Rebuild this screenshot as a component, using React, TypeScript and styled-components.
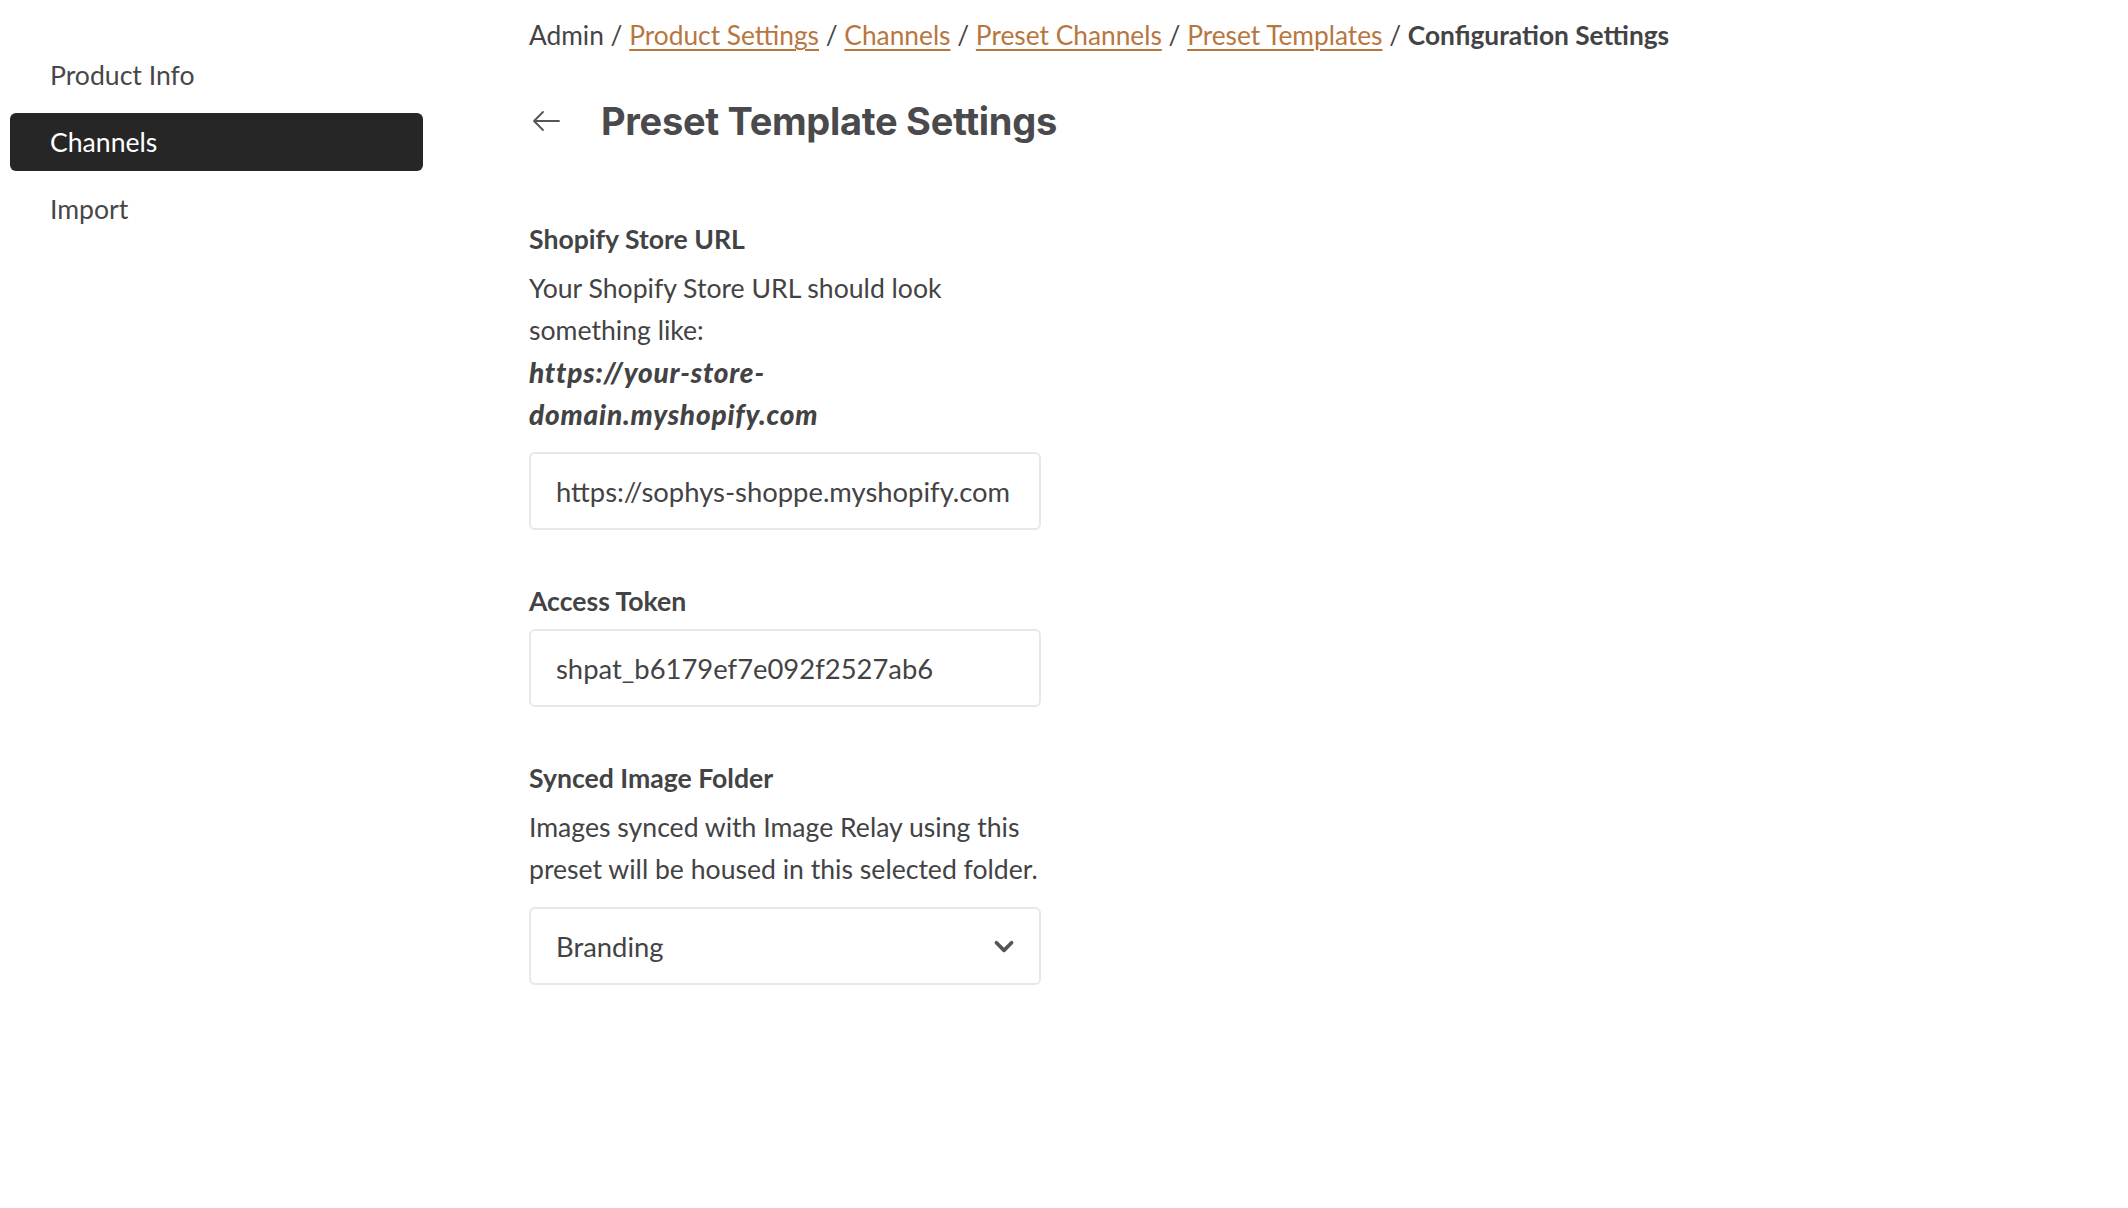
import React from 'react'
import styled, { createGlobalStyle } from 'styled-components'

const GlobalStyle = createGlobalStyle`
    * {
        box-sizing: border-box;
    }

    body {
        margin: 0;
        background: #fff;
        font-family: Lato, "Noto Sans", sans-serif;
        color: #434345;
    }
`

const Page = styled.div`
    display: flex;
    min-height: 1208px;
`

const Sidebar = styled.nav`
    width: 413px;
    margin-left: 10px;
    padding-top: 46px;
`

const NavList = styled.ul`
    display: flex;
    flex-direction: column;
    gap: 9px;
    margin: 0;
    padding: 0;
`

const NavItem = styled.li<{ $active?: boolean }>`
    list-style-type: none;
    height: 58px;
    display: flex;
    align-items: center;
    padding-left: 40px;
    border-radius: 6px;
    font-size: 26.6px;
    background: ${p => (p.$active ? '#262626' : 'transparent')};
    color: ${p => (p.$active ? '#fff' : '#47474a')};
`

const Main = styled.main`
    margin-left: 106px;
    padding-top: 14px;
    width: 1200px;
`

const Breadcrumb = styled.div`
    font-size: 26.3px;
    line-height: 42px;
    color: #434345;
    white-space: nowrap;

    a {
        color: #b8763f;
        text-decoration: underline;
        text-underline-offset: 4px;
        text-decoration-thickness: 2px;
    }

    strong {
        font-weight: 700;
    }
`

const TitleRow = styled.div`
    display: flex;
    align-items: center;
    height: 50px;
    margin-top: 40px;

    svg {
        width: 30px;
        height: 24px;
        margin-left: 2px;
        stroke: #555;
    }
`

const Title = styled.h1`
    margin: 0 0 0 40px;
    font-family: Inter, "Noto Sans", sans-serif;
    font-weight: 700;
    font-size: 38px;
    letter-spacing: -0.3px;
    color: #4a4a4c;
`

const Form = styled.div`
    display: flex;
    flex-direction: column;
    gap: 50px;
    margin-top: 72px;
    width: 512px;
`

const Field = styled.div`
    display: flex;
    flex-direction: column;
`

const Label = styled.label`
    font-size: 26.6px;
    font-weight: 700;
    line-height: 42px;
    margin-bottom: 7px;
    color: #434345;
`

const Help = styled.p`
    margin: 0 0 17px;
    font-size: 26.6px;
    line-height: 42px;
    color: #434345;
    white-space: nowrap;
`

const Example = styled.em`
    display: block;
    font-weight: 900;
    font-style: italic;
    font-size: 28px;
    line-height: 42px;
    letter-spacing: 0.8px;
`

const Box = styled.div`
    height: 78px;
    border: 2px solid #e7e7ec;
    border-radius: 6px;
    display: flex;
    align-items: center;
    justify-content: space-between;
    padding: 0 22px 0 25px;
    font-size: 27.4px;
    color: #434345;

    svg {
        width: 26px;
        height: 26px;
        stroke: #55565a;
    }
`

const BackArrow = () => (
    <svg viewBox="0 0 30 24" fill="none" strokeWidth="1.8" strokeLinecap="round" strokeLinejoin="round">
        <path d="M28 12H3M12 3l-9 9 9 9" />
    </svg>
)

const Chevron = () => (
    <svg viewBox="0 0 24 24" fill="none" strokeWidth="3.4" strokeLinecap="round" strokeLinejoin="round">
        <path d="M5 9l7 7 7-7" />
    </svg>
)

const App = () => {
    return (
        <Page>
            <GlobalStyle />
            <Sidebar>
                <NavList>
                    <NavItem>Product Info</NavItem>
                    <NavItem $active>Channels</NavItem>
                    <NavItem>Import</NavItem>
                </NavList>
            </Sidebar>
            <Main>
                <Breadcrumb>
                    Admin / <a href="#">Product Settings</a> / <a href="#">Channels</a> /{' '}
                    <a href="#">Preset Channels</a> / <a href="#">Preset Templates</a> /{' '}
                    <strong>Configuration Settings</strong>
                </Breadcrumb>
                <TitleRow>
                    <BackArrow />
                    <Title>Preset Template Settings</Title>
                </TitleRow>
                <Form>
                    <Field>
                        <Label>Shopify Store URL</Label>
                        <Help>
                            Your Shopify Store URL should look
                            <br />
                            something like:
                            <Example>
                                https://your-store-
                                <br />
                                domain.myshopify.com
                            </Example>
                        </Help>
                        <Box>https://sophys-shoppe.myshopify.com</Box>
                    </Field>
                    <Field>
                        <Label>Access Token</Label>
                        <Box>shpat_b6179ef7e092f2527ab6</Box>
                    </Field>
                    <Field>
                        <Label>Synced Image Folder</Label>
                        <Help>
                            Images synced with Image Relay using this
                            <br />
                            preset will be housed in this selected folder.
                        </Help>
                        <Box>
                            Branding
                            <Chevron />
                        </Box>
                    </Field>
                </Form>
            </Main>
        </Page>
    )
}

export default App
